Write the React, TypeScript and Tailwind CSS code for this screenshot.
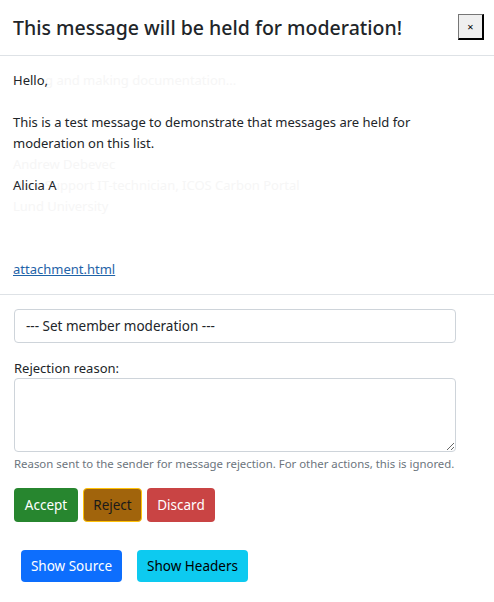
import React from "react";

const font = { fontFamily: '"Segoe UI", "Noto Sans", "Liberation Sans", sans-serif' };

export default function App() {
  return (
    <div className="w-[494px] min-h-[602px] bg-white text-[#212529]" style={font}>
      <div className="flex h-[56px] items-center justify-between border-b border-[#dee2e6] pl-[13px] pr-[10px]">
        <h5 className="text-[19.5px] font-medium leading-none text-[#212529]">
          This message will be held for moderation!
        </h5>
        <button className="mt-[-1px] flex h-[26px] w-[26px] items-center justify-center border border-[#767676] border-b-2 border-r-2 border-b-black border-r-black bg-[#efefef] text-[11px] leading-none text-black">
          ×
        </button>
      </div>

      <div className="px-[13px] pt-[14px] text-[13px] leading-[21px]">
        <div className="relative">
          <div className="pointer-events-none absolute left-0 top-0 text-[#f6f6f6]">
            <div className="pl-[32px]">g and making documentation...</div>
            <div>&nbsp;</div>
            <div>&nbsp;</div>
            <div>&nbsp;</div>
            <div>Andrew Debevec</div>
            <div>User Support IT-technician, ICOS Carbon Portal</div>
            <div>Lund University</div>
          </div>
          <div className="relative">
            <div>Hello,</div>
            <div>&nbsp;</div>
            <div>This is a test message to demonstrate that messages are held for</div>
            <div>moderation on this list.</div>
            <div>&nbsp;</div>
            <div>Alicia A</div>
            <div>&nbsp;</div>
            <div>&nbsp;</div>
            <div>&nbsp;</div>
            <a href="#" className="text-[#1f63a8] underline">attachment.html</a>
          </div>
        </div>
      </div>

      <div className="mt-[14px] border-t border-[#dee2e6] px-[14px] pt-[14px]">
        <div className="flex h-[34px] w-[442px] items-center rounded border border-[#ced4da] px-[11px] text-[13.5px]">
          --- Set member moderation ---
        </div>

        <div className="mt-[16px] text-[13px] leading-[18px]">Rejection reason:</div>
        <textarea className="mt-[1px] block h-[74px] w-[442px] resize-y rounded border border-[#ced4da]" />
        <div className="mt-[4px] text-[11.4px] leading-[16px] text-[#6c757d]">
          Reason sent to the sender for message rejection. For other actions, this is ignored.
        </div>

        <div className="mt-[16px] flex gap-[5px]">
          <button className="h-[34px] w-[64px] rounded bg-[#27862f] text-[13.5px] text-white">Accept</button>
          <button className="h-[34px] w-[59px] rounded border border-[#ffc107] bg-[#a1640c] text-[13.5px] text-[#1a1a1a]">
            Reject
          </button>
          <button className="h-[34px] w-[68px] rounded bg-[#c94444] text-[13.5px] text-white">Discard</button>
        </div>

        <div className="mt-[28px] flex gap-[15px] pl-[7px]">
          <button className="h-[32px] w-[101px] rounded bg-[#0d6efd] text-[13.5px] text-white">Show Source</button>
          <button className="h-[32px] w-[111px] rounded bg-[#0dcaf0] text-[13.5px] text-black">Show Headers</button>
        </div>
      </div>
    </div>
  );
}
